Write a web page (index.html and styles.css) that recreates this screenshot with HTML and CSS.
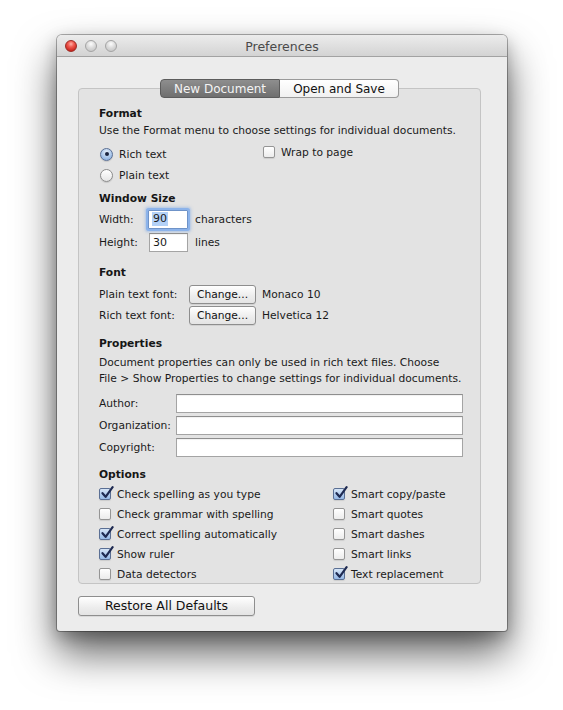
FILE: index.html
```html
<!DOCTYPE html>
<html>
<head>
<meta charset="utf-8">
<link rel="stylesheet" href="styles.css">
</head>
<body>
<div class="stage">
  <div class="window">
    <div class="titlebar">
      <div class="lights">
        <span class="light red"></span>
        <span class="light gray"></span>
        <span class="light gray"></span>
      </div>
      <div class="title">Preferences</div>
    </div>
    <div class="content">
      <div class="tabs">
        <div class="tab selected">New Document</div>
        <div class="tab">Open and Save</div>
      </div>
      <div class="box">
        <div class="heading">Format</div>
        <div class="line">Use the Format menu to choose settings for individual documents.</div>
        <div class="radios">
          <div class="radiocol">
            <div class="row20"><span class="radio on"><span class="dot"></span></span><span class="lbl-r">Rich text</span></div>
            <div class="row20 gap1"><span class="radio"></span><span class="lbl-r">Plain text</span></div>
          </div>
          <div class="wrapcol">
            <div class="row20"><span class="check"></span><span class="lbl-c">Wrap to page</span></div>
          </div>
        </div>

        <div class="heading mt6">Window Size</div>
        <div class="row20 mt2"><span class="wlabel">Width:</span><span class="field small focus"><span class="sel">90</span></span><span class="unit">characters</span></div>
        <div class="row20 mt3"><span class="wlabel">Height:</span><span class="field small hgt">30</span><span class="unit">lines</span></div>

        <div class="heading mt13">Font</div>
        <div class="row20 mt3"><span class="flabel">Plain text font:</span><span class="btn change">Change...</span><span class="fname">Monaco 10</span></div>
        <div class="row20 mt1"><span class="flabel">Rich text font:</span><span class="btn change">Change...</span><span class="fname">Helvetica 12</span></div>

        <div class="heading mt11">Properties</div>
        <div class="para">Document properties can only be used in rich text files. Choose<br>File &gt; Show Properties to change settings for individual documents.</div>
        <div class="row20 mt6"><span class="plabel">Author:</span><span class="field wide"></span></div>
        <div class="row20 mt2"><span class="plabel">Organization:</span><span class="field wide"></span></div>
        <div class="row20 mt2"><span class="plabel">Copyright:</span><span class="field wide"></span></div>

        <div class="heading mt10">Options</div>
        <div class="options">
          <div class="optcol">
            <div class="row20"><span class="check on"><svg viewBox="0 0 14 14" width="14" height="14"><path d="M2.5 7.2 L5.6 10.8 L12.6 1.2" fill="none" stroke="#1e2a52" stroke-width="2.2" stroke-linecap="round" stroke-linejoin="round"/></svg></span><span class="lbl-c">Check spelling as you type</span></div>
            <div class="row20"><span class="check"></span><span class="lbl-c">Check grammar with spelling</span></div>
            <div class="row20"><span class="check on"><svg viewBox="0 0 14 14" width="14" height="14"><path d="M2.5 7.2 L5.6 10.8 L12.6 1.2" fill="none" stroke="#1e2a52" stroke-width="2.2" stroke-linecap="round" stroke-linejoin="round"/></svg></span><span class="lbl-c">Correct spelling automatically</span></div>
            <div class="row20"><span class="check on"><svg viewBox="0 0 14 14" width="14" height="14"><path d="M2.5 7.2 L5.6 10.8 L12.6 1.2" fill="none" stroke="#1e2a52" stroke-width="2.2" stroke-linecap="round" stroke-linejoin="round"/></svg></span><span class="lbl-c">Show ruler</span></div>
            <div class="row20"><span class="check"></span><span class="lbl-c">Data detectors</span></div>
          </div>
          <div class="optcol">
            <div class="row20"><span class="check on"><svg viewBox="0 0 14 14" width="14" height="14"><path d="M2.5 7.2 L5.6 10.8 L12.6 1.2" fill="none" stroke="#1e2a52" stroke-width="2.2" stroke-linecap="round" stroke-linejoin="round"/></svg></span><span class="lbl-c">Smart copy/paste</span></div>
            <div class="row20"><span class="check"></span><span class="lbl-c">Smart quotes</span></div>
            <div class="row20"><span class="check"></span><span class="lbl-c">Smart dashes</span></div>
            <div class="row20"><span class="check"></span><span class="lbl-c">Smart links</span></div>
            <div class="row20"><span class="check on"><svg viewBox="0 0 14 14" width="14" height="14"><path d="M2.5 7.2 L5.6 10.8 L12.6 1.2" fill="none" stroke="#1e2a52" stroke-width="2.2" stroke-linecap="round" stroke-linejoin="round"/></svg></span><span class="lbl-c">Text replacement</span></div>
          </div>
        </div>
      </div>
      <div class="footer">
        <span class="btn restore">Restore All Defaults</span>
      </div>
    </div>
  </div>
</div>
</body>
</html>
```
FILE: styles.css
```css
html, body {
  margin: 0;
  padding: 0;
  background: #ffffff;
}
body {
  font-family: "DejaVu Sans", "Liberation Sans", sans-serif;
  font-size: 10.7px;
  color: #1a1a1a;
  white-space: nowrap;
}
.stage {
  width: 563px;
  height: 710px;
  padding-top: 35px;
  padding-left: 57px;
  box-sizing: border-box;
  overflow: hidden;
}
.window {
  width: 450px;
  height: 596px;
  background: #ececec;
  border-radius: 5px 5px 3px 3px;
  box-shadow: 0 0 0 1px rgba(0,0,0,0.3), 0 22px 42px rgba(0,0,0,0.62), 0 6px 16px rgba(0,0,0,0.25);
  display: flex;
  flex-direction: column;
}
.titlebar {
  height: 22px;
  flex: 0 0 22px;
  background: linear-gradient(#ececec, #d3d3d3);
  border-bottom: 1px solid #a2a2a2;
  border-radius: 5px 5px 0 0;
  box-sizing: border-box;
  position: relative;
  display: flex;
  align-items: center;
}
.lights {
  display: flex;
  gap: 8px;
  padding-left: 8px;
}
.light {
  width: 12px;
  height: 12px;
  border-radius: 50%;
  box-sizing: border-box;
}
.light.red {
  background: radial-gradient(circle at 50% 30%, #ffb0a8 0, #f05a50 35%, #c8231c 80%);
  border: 1px solid #9c2a24;
}
.light.gray {
  background: radial-gradient(circle at 50% 30%, #fdfdfd 0, #dcdcdc 45%, #c4c4c4 90%);
  border: 1px solid #a4a4a4;
}
.title {
  position: absolute;
  left: 0;
  right: 0;
  top: 1px;
  line-height: 22px;
  text-align: center;
  font-size: 12.5px;
  color: #4a4a4a;
  pointer-events: none;
}
.content {
  flex: 1;
  padding: 22px 26px 0 21px;
  display: flex;
  flex-direction: column;
}
.tabs {
  display: flex;
  justify-content: center;
  height: 19px;
  margin-bottom: -10px;
  position: relative;
  z-index: 1;
}
.tab {
  height: 19px;
  line-height: 18px;
  box-sizing: border-box;
  font-size: 12px;
  background: linear-gradient(#ffffff, #f1f1f1);
  border: 1px solid #9a9a9a;
  color: #111;
  text-align: center;
}
.tab:first-child {
  border-radius: 4px 0 0 4px;
  width: 120px;
}
.tab:last-child {
  border-radius: 0 4px 4px 0;
  border-left: none;
  width: 119px;
}
.tab.selected {
  background: linear-gradient(#8e8e8e, #6f6f6f);
  border-color: #5c5c5c;
  color: #f4f4f4;
}
.box {
  background: #e3e3e3;
  border: 1px solid #c4c4c4;
  border-radius: 4px;
  padding: 17px 16px 0 20px;
  height: 496px;
  box-sizing: border-box;
}
.heading {
  height: 16px;
  line-height: 16px;
  font-weight: bold;
  color: #161616;
}
.line {
  height: 16px;
  line-height: 16px;
  margin-top: 1px;
}
.para {
  line-height: 16px;
  margin-top: 3px;
}
.mt1 { margin-top: 1px; }
.mt2 { margin-top: 2px; }
.mt3 { margin-top: 3px; }
.mt6 { margin-top: 6px; }
.mt10 { margin-top: 10px; }
.mt11 { margin-top: 11px; }
.mt13 { margin-top: 13px; }
.row20 {
  height: 20px;
  display: flex;
  align-items: center;
}
.gap1 { margin-top: 1px; }
.radios {
  display: flex;
  margin-top: 5px;
}
.radiocol {
  width: 164px;
}
.wrapcol {
  margin-top: -2px;
}
.radio {
  width: 13px;
  height: 13px;
  border-radius: 50%;
  box-sizing: border-box;
  border: 1px solid #8b8b8b;
  background: linear-gradient(#ffffff, #e6e6e6);
  margin-left: 1px;
  display: flex;
  align-items: center;
  justify-content: center;
  box-shadow: 0 1px 1px rgba(0,0,0,0.12);
}
.radio.on {
  background: radial-gradient(circle at 50% 30%, #e8f1fb 0, #a9c6ea 55%, #7ea6dc 100%);
  border-color: #5a6f94;
}
.dot {
  width: 4px;
  height: 4px;
  border-radius: 50%;
  background: #1a2440;
}
.lbl-r {
  margin-left: 6px;
}
.check {
  width: 12px;
  height: 12px;
  box-sizing: border-box;
  border: 1px solid #959595;
  border-radius: 2px;
  background: linear-gradient(#ffffff, #ececec);
  position: relative;
  box-shadow: 0 1px 1px rgba(0,0,0,0.1);
  flex: 0 0 12px;
}
.check.on {
  background: linear-gradient(#d6e5f7, #95b8e6);
  border-color: #5a6f94;
}
.check svg {
  position: absolute;
  left: 0;
  top: -3px;
}
.lbl-c {
  margin-left: 6px;
}
.wlabel {
  width: 49px;
}
.field {
  background: #ffffff;
  border: 1px solid #a4a4a4;
  border-top-color: #8e8e8e;
  box-sizing: border-box;
  height: 19px;
  line-height: 17px;
  display: flex;
  align-items: center;
  padding-left: 3px;
  box-shadow: inset 0 1px 1px rgba(0,0,0,0.06);
}
.field.small {
  width: 40px;
  font-size: 11px;
}
.field.hgt {
  margin-left: 1px;
  width: 39px;
}
.field.focus {
  border-color: #6f93c8;
  box-shadow: 0 0 0 2px #8cb3ea, 0 0 3px 3px rgba(120,165,230,0.5);
  border-radius: 1px;
}
.sel {
  background: #b3d1f7;
  line-height: 14px;
  padding: 0 1px;
}
.unit {
  margin-left: 7px;
}
.flabel {
  width: 90px;
}
.btn {
  background: linear-gradient(#ffffff, #ececec 60%, #e4e4e4);
  border: 1px solid #8e8e8e;
  border-radius: 3px;
  box-sizing: border-box;
  text-align: center;
  color: #111;
  box-shadow: 0 1px 0 rgba(0,0,0,0.08);
}
.change {
  width: 67px;
  height: 19px;
  line-height: 17px;
}
.fname {
  margin-left: 6px;
}
.plabel {
  width: 77px;
}
.field.wide {
  width: 287px;
}
.options {
  display: grid;
  grid-template-columns: 234px 1fr;
  margin-top: 1px;
}
.footer {
  margin-top: 12px;
  display: flex;
}
.restore {
  width: 177px;
  height: 20px;
  line-height: 18px;
  font-size: 12.5px;
}
```
